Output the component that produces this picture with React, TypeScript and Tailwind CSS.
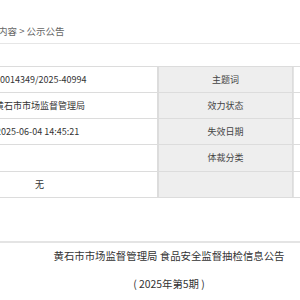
const rows = [
  { value: "0014349/2025-40994", label: "主题词", h: "h-[26px]", pad: "pl-0" },
  { value: "黄石市市场监督管理局", label: "效力状态", h: "h-[26px]", pad: "-ml-[5px]" },
  { value: "2025-06-04 14:45:21", label: "失效日期", h: "h-[26px]", pad: "-ml-[4px]" },
  { value: "", label: "体裁分类", h: "h-[27px]", pad: "pl-0" },
  { value: "无", label: "", h: "h-[26px]", pad: "pl-[35px]" },
];

export default function App() {
  return (
    <div className="w-[300px] h-[300px] overflow-hidden bg-white font-['Noto_Sans_CJK_SC','Noto_Sans',sans-serif]">
      {/* breadcrumb */}
      <div className="pt-[24px] pb-[5px] border-b border-[#e6e6e6] text-[9.5px] leading-[14px] text-[#666] whitespace-nowrap">
        <span className="-ml-[2px] inline-block">内容 &gt; 公示公告</span>
      </div>

      {/* meta table */}
      <div className="mt-[22px] border-t border-[#dcdcdc]">
        {rows.map((row, i) => (
          <div key={i} className={`flex ${row.h} border-b border-[#dcdcdc]`}>
            <div className="w-[158px] shrink-0 border-r border-[#dcdcdc] flex items-center text-[9px] text-[#333] whitespace-nowrap">
              <span className={row.pad}>{row.value}</span>
            </div>
            <div className="w-[135px] shrink-0 bg-[#eeeeee] border-l border-r border-[#dcdcdc] flex items-center justify-center text-[9px] text-[#444]">
              {row.label}
            </div>
            <div className="flex-1 border-l border-[#e4e4e4]" />
          </div>
        ))}
      </div>

      {/* title */}
      <div className="mt-[43px] border-t-2 border-[#e4e4e4] pl-[38px] pt-[5px] text-[10.4px] leading-[16px] text-[#333] text-center whitespace-nowrap">
        <p>黄石市市场监督管理局 食品安全监督抽检信息公告</p>
        <p className="mt-[12px]">( 2025年第5期 )</p>
      </div>
    </div>
  );
}
